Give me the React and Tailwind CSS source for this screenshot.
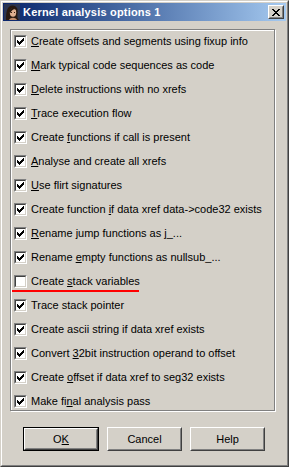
import React from "react";

const items = [
  { pre: "", u: "C", post: "reate offsets and segments using fixup info", on: true },
  { pre: "", u: "M", post: "ark typical code sequences as code", on: true },
  { pre: "", u: "D", post: "elete instructions with no xrefs", on: true },
  { pre: "", u: "T", post: "race execution flow", on: true },
  { pre: "Create ", u: "f", post: "unctions if call is present", on: true },
  { pre: "", u: "A", post: "nalyse and create all xrefs", on: true },
  { pre: "", u: "U", post: "se flirt signatures", on: true },
  { pre: "Create function ", u: "i", post: "f data xref data->code32 exists", on: true },
  { pre: "", u: "R", post: "ename jump functions as j_...", on: true },
  { pre: "Rename ", u: "e", post: "mpty functions as nullsub_...", on: true },
  { pre: "Create ", u: "s", post: "tack variables", on: false },
  { pre: "Trace stack pointer", u: "", post: "", on: true },
  { pre: "Create ascii string if data xref exists", u: "", post: "", on: true },
  { pre: "Convert ", u: "3", post: "2bit instruction operand to offset", on: true },
  { pre: "Create ", u: "o", post: "ffset if data xref to seg32 exists", on: true },
  { pre: "Make fi", u: "n", post: "al analysis pass", on: true },
];

function Check() {
  return (
    <svg width="7" height="7" viewBox="0 0 7 7" shapeRendering="crispEdges">
      <rect x="6" y="0" width="1" height="1" fill="#000" />
      <rect x="5" y="1" width="2" height="1" fill="#000" />
      <rect x="0" y="2" width="1" height="1" fill="#000" />
      <rect x="4" y="2" width="3" height="1" fill="#000" />
      <rect x="0" y="3" width="2" height="1" fill="#000" />
      <rect x="3" y="3" width="3" height="1" fill="#000" />
      <rect x="0" y="4" width="5" height="1" fill="#000" />
      <rect x="1" y="5" width="3" height="1" fill="#000" />
      <rect x="2" y="6" width="1" height="1" fill="#000" />
    </svg>
  );
}

function Box({ on }) {
  return (
    <div className="w-[13px] h-[13px] shrink-0 border border-t-[#808080] border-l-[#808080] border-b-white border-r-white">
      <div className="w-[11px] h-[11px] border border-t-[#404040] border-l-[#404040] border-b-[#d4d0c8] border-r-[#d4d0c8] bg-white flex items-center justify-center">
        {on ? <Check /> : null}
      </div>
    </div>
  );
}

function Btn({ children, def, w }) {
  const inner = (
    <div className="w-full h-full border border-t-white border-l-white border-b-[#404040] border-r-[#404040]">
      <div className="w-full h-full border border-t-[#d4d0c8] border-l-[#d4d0c8] border-b-[#808080] border-r-[#808080] flex items-center justify-center">
        {children}
      </div>
    </div>
  );
  return (
    <div className={(w || "w-[75px]") + " h-[24px] " + (def ? "border border-black" : "")}>{inner}</div>
  );
}

export default function App() {
  return (
    <div
      className="w-[289px] h-[467px] bg-[#d4d0c8] text-black text-[11px] leading-[13px]"
      style={{ fontFamily: '"Liberation Sans", Arial, sans-serif' }}
    >
      <div className="w-full h-full border border-t-[#d4d0c8] border-l-[#d4d0c8] border-b-[#404040] border-r-[#404040]">
        <div className="w-full h-full border border-t-white border-l-white border-b-[#808080] border-r-[#808080] p-px relative">
          {/* Title bar */}
          <div className="h-[18px] bg-gradient-to-r from-[#0a246a] to-[#a6caf0] flex items-center pl-[1px] pr-[2px]">
            <svg width="16" height="16" viewBox="0 0 16 16" className="shrink-0">
              <rect width="16" height="16" fill="#2c3550" />
              <path d="M2 16 C2 8 3 1.5 8.5 1.5 C13 1.5 14.5 6 13.5 10 C13 13 13.5 15 15 16 Z" fill="#2a1a10" />
              <ellipse cx="9" cy="8.5" rx="3.2" ry="4.2" fill="#e0b090" />
              <path d="M5 16 C6.5 13 11.5 13 13 16 Z" fill="#c48e6c" />
              <path d="M5 8 C5.5 3 11 2 13 6.5 C11 4.5 8 5 6.5 9 Z" fill="#2a1a10" />
              <rect x="7" y="8" width="1" height="1" fill="#3a2010" />
              <rect x="10" y="8" width="1" height="1" fill="#3a2010" />
            </svg>
            <span className="ml-[3px] text-white font-bold text-[11px] leading-none tracking-[0.2px]">
              Kernel analysis options 1
            </span>
            <div className="ml-auto w-[16px] h-[14px] bg-[#d4d0c8] border border-t-white border-l-white border-b-[#404040] border-r-[#404040]">
              <div className="w-full h-full border border-t-[#d4d0c8] border-l-[#d4d0c8] border-b-[#808080] border-r-[#808080] flex items-center justify-center">
                <svg width="8" height="7" viewBox="0 0 8 7" shapeRendering="crispEdges">
                  <path d="M0 0h2v1h-2zM6 0h2v1h-2zM1 1h2v1h-2zM5 1h2v1h-2zM2 2h4v1h-4zM3 3h2v1h-2zM2 4h4v1h-4zM1 5h2v1h-2zM5 5h2v1h-2zM0 6h2v1h-2zM6 6h2v1h-2z" fill="#000" />
                </svg>
              </div>
            </div>
          </div>

          {/* Group box */}
          <div className="mt-[8px] ml-[7px] w-[265px] h-[382px] border border-[#808080] shadow-[inset_1px_1px_0_#fff,1px_1px_0_#fff] pt-[5px] pl-[3px] flex flex-col gap-[11px]">
            {items.map((it, i) => (
              <div key={i} className="flex items-center h-[13px]">
                <Box on={it.on} />
                <span className="ml-[4px] whitespace-nowrap">
                  {it.pre}
                  {it.u ? <span className="underline underline-offset-[1px]">{it.u}</span> : null}
                  {it.post}
                </span>
              </div>
            ))}
          </div>

          {/* Buttons */}
          <div className="mt-[16px] ml-[20px] flex gap-[8px]">
            <Btn def w="w-[76px]">
              <span>
                O<span className="underline underline-offset-[1px]">K</span>
              </span>
            </Btn>
            <Btn>Cancel</Btn>
            <Btn>Help</Btn>
          </div>

          {/* Red annotation line */}
          <div className="absolute left-[10px] top-[288px] w-[127px] h-[2px] bg-[#ff0000]" />
        </div>
      </div>
    </div>
  );
}
